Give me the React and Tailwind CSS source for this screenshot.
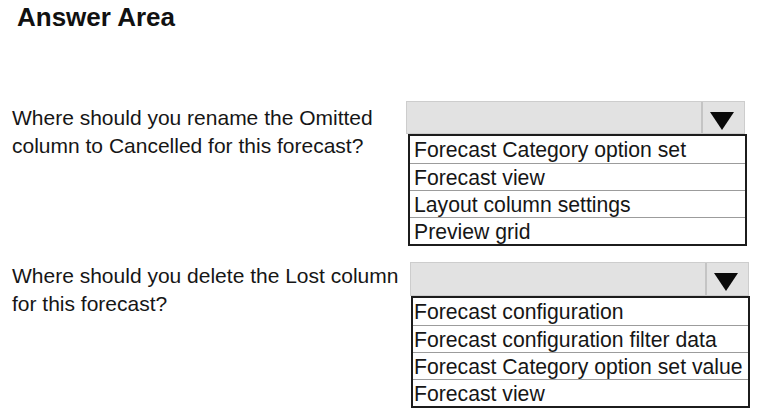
import React from 'react';

// Reponse area with two questions and their option lists
const questions = [
  {
    lines: ['Where should you rename the Omitted', 'column to Cancelled for this forecast?'],
    options: ['Forecast Category option set', 'Forecast view', 'Layout column settings', 'Preview grid'],
    qWidth: 'w-[406px]',
    barH: 'h-[33px]',
    listOffset: 'ml-[2px]',
    pad: 'pl-[4px]',
    top: 'mt-0',
    ddTop: 'mt-0',
  },
  {
    lines: ['Where should you delete the Lost column', 'for this forecast?'],
    options: [
      'Forecast configuration',
      'Forecast configuration filter data',
      'Forecast Category option set value',
      'Forecast view',
    ],
    qWidth: 'w-[410px]',
    barH: 'h-[34px]',
    listOffset: 'ml-[1px]',
    pad: 'pl-[1px]',
    top: 'mt-[13px]',
    ddTop: 'mt-[3px]',
  },
];

function Arrow() {
  return (
    <svg width="24" height="18" viewBox="0 0 24 18">
      <polygon points="0,0 24,0 12,18" fill="#0a0a0a" />
    </svg>
  );
}

function Dropdown({ options, barH, listOffset, pad }) {
  return (
    <div className="flex flex-col">
      <div className={`flex w-[339px] ${barH} bg-[#e2e2e2] border border-[#cdcdcd]`}>
        <div className="flex-1" />
        <div className="w-[43px] border-l-2 border-[#c4c4c4] flex justify-center pt-[10px] pr-[4px]">
          <Arrow />
        </div>
      </div>
      <div className={`${listOffset} w-[339px] border-2 border-[#1c1c1c] flex flex-col bg-white`}>
        {options.map((opt, i) => (
          <div
            key={opt}
            className={`h-[27px] ${pad} text-[21.2px] leading-[27px] text-[#161616] whitespace-nowrap ${
              i > 0 ? 'border-t border-[#9c9c9c]' : ''
            }`}
          >
            {opt}
          </div>
        ))}
      </div>
    </div>
  );
}

export default function App() {
  return (
    <div className="w-[758px] h-[416px] bg-white overflow-hidden font-['Liberation_Sans',Arial,sans-serif] text-[#161616]">
      <h1 className="pl-[17px] pt-[2px] text-[26px] leading-[30px] font-bold text-[#111]">Answer Area</h1>

      <div className="mt-[69px] flex flex-col">
        {questions.map((q) => (
          <div key={q.lines[0]} className={`flex items-start ${q.top}`}>
            <div className={`${q.qWidth} pl-[12px] pt-[3px] text-[21px] leading-[28px]`}>
              {q.lines.map((l) => (
                <div key={l} className="whitespace-nowrap">{l}</div>
              ))}
            </div>
            <div className={q.ddTop}>
              <Dropdown options={q.options} barH={q.barH} listOffset={q.listOffset} pad={q.pad} />
            </div>
          </div>
        ))}
      </div>
    </div>
  );
}
